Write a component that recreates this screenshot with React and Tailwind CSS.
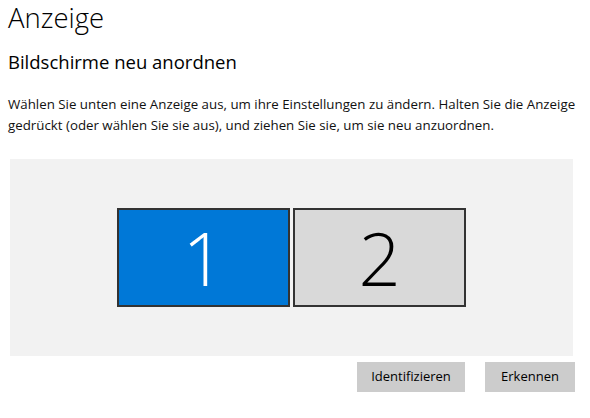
import React from 'react';

const font = { fontFamily: '"Segoe UI", "Open Sans", "Noto Sans", sans-serif' };

function Monitor({ n, active }) {
  return (
    <div
      className={`w-[173px] h-[99px] border-2 border-[#333333] flex items-center justify-center ${
        active ? 'bg-[#0078d7] text-white' : 'bg-[#d9d9d9] text-black'
      }`}
    >
      <span className="text-[74px] font-light leading-none">{n}</span>
    </div>
  );
}

export default function App() {
  return (
    <div className="w-[590px] h-[418px] bg-white text-black pl-[8px] pt-[1px]" style={font}>
      <h1 className="text-[27.5px] font-light leading-[34px]">Anzeige</h1>
      <h2 className="mt-[15px] text-[18.5px] leading-[24px]">Bildschirme neu anordnen</h2>
      <p className="mt-[20px] text-[13.3px] leading-[21px] text-[#111] whitespace-nowrap">
        Wählen Sie unten eine Anzeige aus, um ihre Einstellungen zu ändern. Halten Sie die Anzeige
        <br />
        gedrückt (oder wählen Sie sie aus), und ziehen Sie sie, um sie neu anzuordnen.
      </p>
      <div className="mt-[23px] ml-[2px] w-[563px] h-[197px] bg-[#f2f2f2] flex items-center justify-center gap-[3px]">
        <Monitor n="1" active />
        <Monitor n="2" />
      </div>
      <div className="mt-[6px] w-[567px] flex justify-end gap-[20px]">
        <button className="w-[108px] h-[30px] bg-[#cccccc] text-[13px]">Identifizieren</button>
        <button className="w-[90px] h-[30px] bg-[#cccccc] text-[13px]">Erkennen</button>
      </div>
    </div>
  );
}
